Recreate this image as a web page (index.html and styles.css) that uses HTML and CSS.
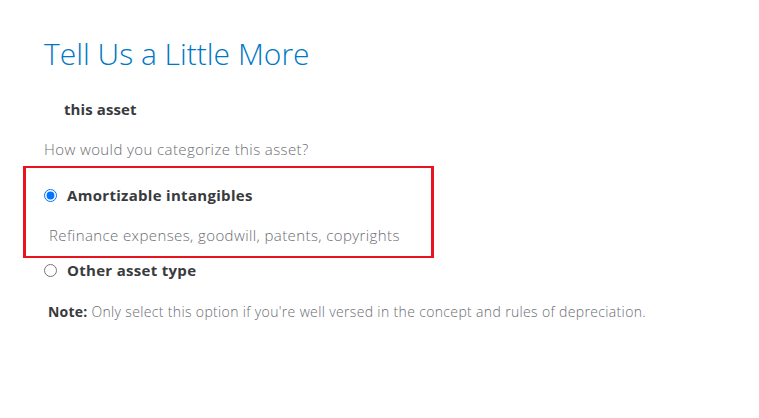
FILE: index.html
```html
<!DOCTYPE html>
<html lang="en">
<head>
<meta charset="utf-8">
<link rel="stylesheet" href="styles.css">
<title>Tell Us a Little More</title>
</head>
<body>
<main class="page">
  <h1 class="title">Tell Us a Little More</h1>
  <p class="subhead">this asset</p>
  <p class="question">How would you categorize this asset?</p>
  <div class="choice highlight">
    <label class="option">
      <input type="radio" name="cat" class="radio" checked>
      <span class="option-label">Amortizable intangibles</span>
    </label>
    <p class="desc">Refinance expenses, goodwill, patents, copyrights</p>
  </div>
  <div class="choice">
    <label class="option">
      <input type="radio" name="cat" class="radio">
      <span class="option-label">Other asset type</span>
    </label>
  </div>
  <p class="note"><strong class="note-key">Note:</strong> Only select this option if you're well versed in the concept and rules of depreciation.</p>
</main>
</body>
</html>
```
FILE: styles.css
```css
html, body {
  margin: 0;
  padding: 0;
  background: #ffffff;
}
body {
  font-family: "Open Sans", "Liberation Sans", sans-serif;
  color: #393a3d;
}
.page {
  padding: 34px 0 0 44px;
}
.title {
  margin: 0;
  font-size: 30px;
  font-weight: 300;
  color: #0077c5;
  line-height: 40px;
}
.subhead {
  margin: 25px 0 0 20px;
  font-size: 15px;
  font-weight: 700;
  line-height: 20px;
  letter-spacing: 0.1px;
}
.question {
  margin: 20px 0 0 0;
  font-size: 15px;
  font-weight: 300;
  color: #6b6c72;
  line-height: 20px;
  letter-spacing: 0.4px;
}
.highlight {
  box-sizing: border-box;
  width: 411px;
  margin: 7px 0 0 -21px;
  border: 2px solid #e8141f;
  border-left-width: 3px;
  border-right-width: 3px;
  padding: 15px 0 11px 18px;
}
.option {
  display: flex;
  align-items: center;
  gap: 10px;
}
.radio {
  margin: 0;
  width: 13px;
  height: 13px;
}
.option-label {
  font-size: 15px;
  font-weight: 700;
  line-height: 24px;
  letter-spacing: 0.3px;
}
.desc {
  margin: 18px 0 0 5px;
  font-size: 15px;
  font-weight: 300;
  color: #6b6c72;
  line-height: 20px;
  letter-spacing: 0.4px;
}
.choice + .choice {
  margin-top: 0;
}
.note {
  margin: 20px 0 0 4px;
  font-size: 14px;
  font-weight: 300;
  color: #6b6c72;
  line-height: 20px;
  letter-spacing: 0.35px;
}
.note-key {
  font-weight: 700;
  color: #393a3d;
  letter-spacing: 0.2px;
}
```
